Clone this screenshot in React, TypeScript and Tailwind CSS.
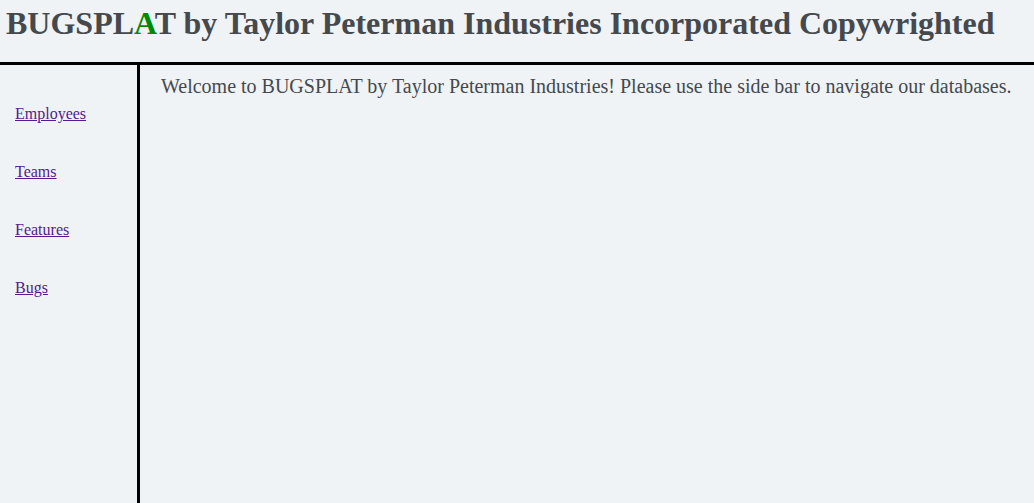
export default function App() {
  const links = ['Employees', 'Teams', 'Features', 'Bugs']
  return (
    <div className="min-h-screen bg-[#eff3f6] font-['Liberation_Serif',serif] flex flex-col">
      <header className="h-[65px] border-b-[3px] border-black pl-[6px] pt-[5px]">
        <h1 className="text-[32px] leading-[37px] font-bold text-[#45494d] whitespace-nowrap">
          BUGSPL<span className="text-[#008a00]">A</span>T by Taylor Peterman Industries Incorporated Copywrighted
        </h1>
      </header>
      <div className="flex flex-1">
        <nav className="w-[140px] border-r-[3px] border-black flex flex-col gap-[40px] pt-[40px] pl-[15px]">
          {links.map((l) => (
            <a key={l} href="#" className="text-[16px] leading-[18px] text-[#551a8b] underline">
              {l}
            </a>
          ))}
        </nav>
        <main className="flex-1 pl-[21px] pt-[10px]">
          <p className="text-[20px] leading-[23px] text-[#45494d] whitespace-nowrap">
            Welcome to BUGSPLAT by Taylor Peterman Industries! Please use the side bar to navigate our databases.
          </p>
        </main>
      </div>
    </div>
  )
}
